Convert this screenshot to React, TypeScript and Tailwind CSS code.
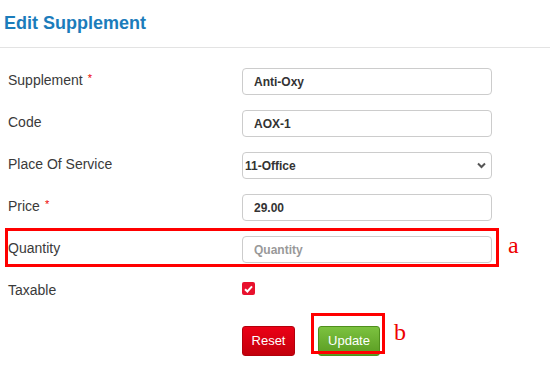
import React from 'react';

const label = 'pt-[2px] text-[14px] leading-5 text-[#3a3a3a]';
const input =
  'h-[27px] w-[250px] rounded-[4px] border border-[#ccc] bg-white px-[11px] text-[12px] font-bold text-[#333] outline-none placeholder:text-[#999]';

function Req() {
  return <span className="ml-[5px] align-top text-[11px] leading-4 text-[#e00]">*</span>;
}

function Row({ name, required, children }: { name: string; required?: boolean; children: React.ReactNode }) {
  return (
    <div className="flex items-start">
      <div className={`w-[234px] shrink-0 ${label}`}>
        {name}
        {required && <Req />}
      </div>
      {children}
    </div>
  );
}

export default function App() {
  return (
    <div className="relative h-[381px] w-[550px] bg-white font-['Liberation_Sans',Arial,sans-serif]">
      <div className="flex h-[48px] items-center border-b border-[#e3e3e3] px-[4px]">
        <h1 className="text-[18px] font-bold text-[#1b7cbb]">Edit Supplement</h1>
      </div>

      <div className="flex flex-col gap-[15px] px-[8px] pt-[20px]">
        <Row name="Supplement" required>
          <input className={input} defaultValue="Anti-Oxy" />
        </Row>
        <Row name="Code">
          <input className={input} defaultValue="AOX-1" />
        </Row>
        <Row name="Place Of Service">
          <div className="relative">
            <select className={`${input} appearance-none pl-[2px]`} defaultValue="11-Office">
              <option>11-Office</option>
            </select>
            <svg
              className="pointer-events-none absolute right-[6px] top-[10px]"
              width="9"
              height="7"
              viewBox="0 0 9 7"
              fill="none"
            >
              <path d="M1 1.5 L4.5 5 L8 1.5" stroke="#555" strokeWidth="2" />
            </svg>
          </div>
        </Row>
        <Row name="Price" required>
          <input className={input} defaultValue="29.00" />
        </Row>
        <Row name="Quantity">
          <input className={input} placeholder="Quantity" />
        </Row>
        <Row name="Taxable">
          <div className="mt-[4px] flex h-[13px] w-[13px] items-center justify-center rounded-[2px] bg-[#e8112d]">
            <svg width="9" height="8" viewBox="0 0 9 8" fill="none">
              <path d="M1 4.2 L3.4 6.5 L8 1.3" stroke="#fff" strokeWidth="2" />
            </svg>
          </div>
        </Row>

        <div className="mt-[11px] flex gap-[23px] pl-[234px]">
          <button className="h-[30px] w-[53px] rounded-[3px] border border-[#b3000b] bg-gradient-to-b from-[#ec0016] to-[#c3000c] text-[13px] text-white">
            Reset
          </button>
          <button className="h-[30px] w-[62px] rounded-[3px] border border-[#4f8f1c] bg-gradient-to-b from-[#7cc23f] to-[#5a9c22] text-[13px] text-white">
            Update
          </button>
        </div>
      </div>

      {/* annotation overlays */}
      <div className="pointer-events-none absolute left-[5px] top-[228px] h-[39px] w-[494px] border-[3px] border-[#f00]" />
      <span className="pointer-events-none absolute left-[508px] top-[231px] font-['Liberation_Serif',serif] text-[24px] leading-7 text-[#e00]">
        a
      </span>
      <div className="pointer-events-none absolute left-[311px] top-[313px] h-[41px] w-[74px] border-[3px] border-[#f00]" />
      <span className="pointer-events-none absolute left-[394px] top-[318px] font-['Liberation_Serif',serif] text-[24px] leading-7 text-[#e00]">
        b
      </span>
    </div>
  );
}
